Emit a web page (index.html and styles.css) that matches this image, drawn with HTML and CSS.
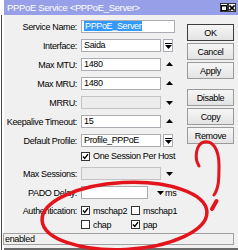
FILE: index.html
```html
<!DOCTYPE html>
<html>
<head>
<meta charset="utf-8">
<link rel="stylesheet" href="styles.css">
</head>
<body>
<div class="win">
  <div class="titlebar">
    <span class="title">PPPoE Service &lt;PPPoE_Server&gt;</span>
    <div class="tbtns">
      <span class="tbtn"><svg width="6" height="6" viewBox="0 0 6 6"><rect x="0.5" y="0.5" width="5" height="5" fill="none" stroke="#000"/><rect x="0" y="0" width="6" height="1.5" fill="#000"/></svg></span>
      <span class="tbtn"><svg width="6" height="6" viewBox="0 0 6 6"><path d="M0.5 0.5L5.5 5.5M5.5 0.5L0.5 5.5" stroke="#000" stroke-width="1.6"/></svg></span>
    </div>
  </div>
  <div class="content">
    <div class="form">
      <div class="row"><span class="lbl">Service Name:</span><div class="ctl"><div class="field wide"><span class="sel">PPPoE_Server</span></div></div></div>
      <div class="row"><span class="lbl">Interface:</span><div class="ctl"><div class="field">Saida</div><span class="dd"><svg width="7" height="6" viewBox="0 0 7 6"><rect x="0" y="0" width="7" height="1" fill="#000"/><path d="M0 2H7L3.5 6Z" fill="#000"/></svg></span></div></div>
      <div class="row"><span class="lbl">Max MTU:</span><div class="ctl"><div class="field">1480</div><span class="arrow up"><svg width="7" height="4" viewBox="0 0 7 4"><path d="M0 4H7L3.5 0Z" fill="#000"/></svg></span></div></div>
      <div class="row"><span class="lbl">Max MRU:</span><div class="ctl"><div class="field">1480</div><span class="arrow up"><svg width="7" height="4" viewBox="0 0 7 4"><path d="M0 4H7L3.5 0Z" fill="#000"/></svg></span></div></div>
      <div class="row"><span class="lbl">MRRU:</span><div class="ctl"><div class="field dis"></div><span class="arrow"><svg width="7" height="4" viewBox="0 0 7 4"><path d="M0 0H7L3.5 4Z" fill="#000"/></svg></span></div></div>
      <div class="row"><span class="lbl">Keepalive Timeout:</span><div class="ctl"><div class="field">15</div><span class="arrow up"><svg width="7" height="4" viewBox="0 0 7 4"><path d="M0 4H7L3.5 0Z" fill="#000"/></svg></span></div></div>
      <div class="row"><span class="lbl">Default Profile:</span><div class="ctl"><div class="field">Profile_PPPoE</div><span class="dd"><svg width="7" height="6" viewBox="0 0 7 6"><rect x="0" y="0" width="7" height="1" fill="#000"/><path d="M0 2H7L3.5 6Z" fill="#000"/></svg></span></div></div>
      <div class="chkrow"><span class="cb"><svg width="7" height="7" viewBox="0 0 7 7"><path d="M1 3.5L2.8 5.5L6 1.2" fill="none" stroke="#000" stroke-width="1.4"/></svg></span><span>One Session Per Host</span></div>
      <div class="row"><span class="lbl">Max Sessions:</span><div class="ctl"><div class="field dis"></div><span class="arrow"><svg width="7" height="4" viewBox="0 0 7 4"><path d="M0 0H7L3.5 4Z" fill="#000"/></svg></span></div></div>
      <div class="row"><span class="lbl">PADO Delay:</span><div class="ctl"><div class="field short"></div><span class="arrow pado"><svg width="7" height="4" viewBox="0 0 7 4"><path d="M0 0H7L3.5 4Z" fill="#000"/></svg></span><span class="unit">ms</span></div></div>
      <div class="row auth"><span class="lbl">Authentication:</span><div class="ctl"><span class="opt"><span class="cb"><svg width="7" height="7" viewBox="0 0 7 7"><path d="M1 3.5L2.8 5.5L6 1.2" fill="none" stroke="#000" stroke-width="1.4"/></svg></span>mschap2</span><span class="opt"><span class="cb"></span>mschap1</span></div></div>
      <div class="row auth2"><span class="lbl"></span><div class="ctl"><span class="opt"><span class="cb"></span>chap</span><span class="opt"><span class="cb"><svg width="7" height="7" viewBox="0 0 7 7"><path d="M1 3.5L2.8 5.5L6 1.2" fill="none" stroke="#000" stroke-width="1.4"/></svg></span>pap</span></div></div>
    </div>
    <div class="btns">
      <div class="btn def">OK</div>
      <div class="btn">Cancel</div>
      <div class="btn">Apply</div>
      <div class="btn sep">Disable</div>
      <div class="btn">Copy</div>
      <div class="btn">Remove</div>
    </div>
  </div>
  <div class="status">enabled</div>
</div>
<svg class="annot" width="238" height="250" viewBox="0 0 238 250">
  <ellipse cx="124.5" cy="216" rx="82.5" ry="33.5" fill="none" stroke="#e3141b" stroke-width="3.5" transform="rotate(-3 124.5 216)"/>
  <path d="M199 166C194 158 196 144 204 142C213 140 219 150 219 165C219 178 219 188 214 195" fill="none" stroke="#e3141b" stroke-width="3" stroke-linecap="round"/>
  <path d="M216.5 201L212 209" fill="none" stroke="#e3141b" stroke-width="4" stroke-linecap="round"/>
</svg>
</body>
</html>
```

FILE: styles.css
```css
* { box-sizing: border-box; }
html, body { margin: 0; padding: 0; }
body {
  width: 238px;
  height: 250px;
  overflow: hidden;
  position: relative;
  background: linear-gradient(#4a4a4a, #4a4a4a) 1px 15px / 1px 100% no-repeat, #ffffff;
  font-family: "Liberation Sans", Arial, sans-serif;
  font-size: 9px;
  letter-spacing: -0.35px;
  color: #000;
}
.win {
  margin-left: 4px;
  height: 250px;
  background: #f0f0f0;
  display: flex;
  flex-direction: column;
  border-bottom: 2px solid #6a6a6a;
}
.titlebar {
  height: 15px;
  flex: none;
  background: #979fe8;
  display: flex;
  align-items: center;
  padding-left: 3px;
  color: #fff;
}
.title { flex: 1; white-space: nowrap; font-size: 9.5px; }
.tbtns { display: flex; margin-right: 2px; }
.tbtn {
  width: 8px;
  height: 9px;
  border: 1px solid #333;
  background: #f4f4f4;
  display: flex;
  align-items: center;
  justify-content: center;
}
.content { display: flex; padding-top: 5px; flex: none; }
.form { width: 179px; display: flex; flex-direction: column; gap: 6px; }
.row {
  display: grid;
  grid-template-columns: 73px auto;
  column-gap: 4px;
  align-items: center;
  height: 13px;
}
.lbl { text-align: right; white-space: nowrap; }
.ctl { display: flex; align-items: center; white-space: nowrap; }
.field {
  width: 80px;
  height: 13px;
  border: 1px solid #abadb3;
  background: #fff;
  padding-left: 2px;
  line-height: 11px;
}
.field.wide { width: 94px; }
.field.short { width: 67px; }
.field.dis { background: #ececec; border-color: #c4c4c4; }
.sel { background: #3399ff; color: #fff; padding: 0 1px; }
.arrow { margin-left: 5px; display: flex; }
.arrow.up { margin-top: -1px; }
.arrow.pado { margin-left: 9px; }
.unit { margin-left: 1px; }
.dd {
  margin-left: 2px;
  width: 10px;
  height: 13px;
  border: 1px solid #abadb3;
  background: #fff;
  display: flex;
  align-items: center;
  justify-content: center;
}
.chkrow {
  height: 10px;
  margin-top: -2px;
  display: flex;
  align-items: center;
  padding-left: 77px;
  white-space: nowrap;
}
.cb {
  width: 9px;
  height: 9px;
  flex: none;
  border: 1px solid #333;
  background: #fff;
  margin-right: 3px;
  display: flex;
  align-items: center;
  justify-content: center;
}
.row.auth { height: 11px; }
.row.auth2 { height: 11px; margin-top: -3px; }
.opt { display: flex; align-items: center; width: 50px; }
.btns {
  width: 47px;
  margin-left: 4px;
  display: flex;
  flex-direction: column;
  gap: 2px;
  padding-top: 4px;
}
.btn {
  height: 17px;
  border: 1px solid #9a9a9a;
  background: linear-gradient(#f6f6f6, #e3e3e3);
  display: flex;
  align-items: center;
  justify-content: center;
}
.btn.def { border-color: #3c3c3c; }
.btn.sep { margin-top: 8px; }
.status {
  margin: 3px 4px 0 -1px;
  height: 12px;
  border: 1px solid #a0a0a0;
  padding-left: 1px;
  line-height: 10px;
  flex: none;
}
.annot { position: absolute; left: 0; top: 0; pointer-events: none; }
```
